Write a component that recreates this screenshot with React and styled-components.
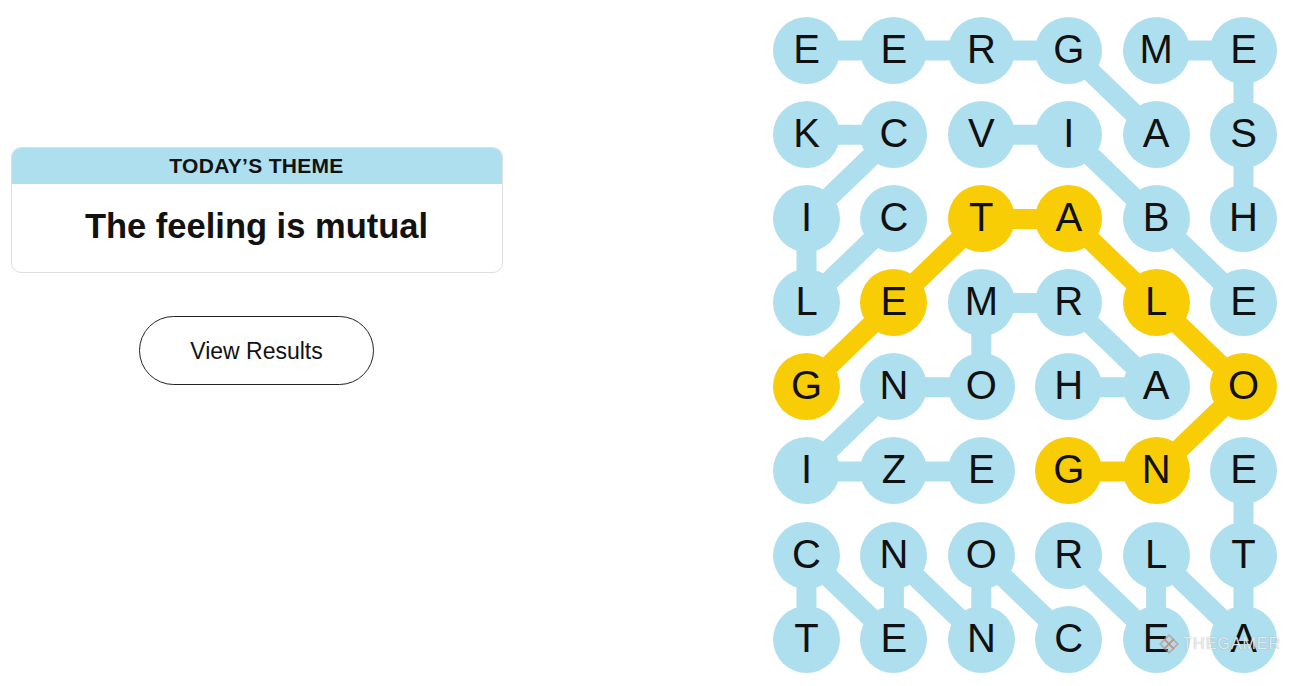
import styled, { createGlobalStyle } from "styled-components";

const GlobalStyle = createGlobalStyle`
  html, body {
    margin: 0;
    padding: 0;
    background: #ffffff;
  }
  body {
    font-family: "Liberation Sans", Arial, sans-serif;
    color: #000;
  }
`;

const BLUE = "#aedfee";
const YELLOW = "#f8cd05";
const SIZE = 67;
const COL_GAP = 20.4;
const ROW_GAP = 17.2;

const Page = styled.div`
  display: flex;
  width: 1302px;
  height: 686px;
  overflow: hidden;
`;

const LeftPane = styled.section`
  width: 492px;
  margin-left: 10.5px;
  padding-top: 146.5px;
  display: flex;
  flex-direction: column;
  align-items: center;
`;

const ThemeCard = styled.div`
  width: 100%;
  box-sizing: border-box;
  height: 126px;
  border: 1px solid #dedede;
  border-radius: 10px;
  overflow: hidden;
`;

const ThemeHeader = styled.div`
  background: ${BLUE};
  height: 36px;
  display: flex;
  align-items: center;
  justify-content: center;
  font-size: 21px;
  font-weight: 700;
  letter-spacing: 0.3px;
  color: #121212;
`;

const ThemeTitle = styled.h1`
  margin: 0;
  padding-top: 22px;
  text-align: center;
  font-size: 34.5px;
  line-height: 40px;
  font-weight: 700;
  color: #121212;
`;

const ResultsButton = styled.button`
  margin-top: 43px;
  width: 235px;
  height: 69px;
  padding-top: 3px;
  border: 1px solid #222;
  border-radius: 35px;
  background: #fff;
  font-family: "Liberation Sans", Arial, sans-serif;
  font-size: 23px;
  color: #121212;
  cursor: pointer;
`;

const Board = styled.div`
  position: relative;
  margin-left: auto;
  margin-right: 25px;
  margin-top: 16.5px;
  height: fit-content;
`;

const Lines = styled.svg`
  position: absolute;
  left: 0;
  top: 0;
  z-index: 0;
  overflow: visible;
`;

const LetterGrid = styled.div`
  position: relative;
  z-index: 1;
  display: grid;
  grid-template-columns: repeat(6, ${SIZE}px);
  grid-auto-rows: ${SIZE}px;
  column-gap: ${COL_GAP}px;
  row-gap: ${ROW_GAP}px;
`;

const Letter = styled.div`
  width: ${SIZE}px;
  height: ${SIZE}px;
  border-radius: 50%;
  background: ${(p) => (p.$gold ? YELLOW : BLUE)};
  display: flex;
  align-items: center;
  justify-content: center;
  font-size: 40px;
  font-family: "Liberation Sans", Arial, sans-serif;
  color: #111;
  line-height: 1;
  padding-bottom: 3px;
  box-sizing: border-box;
`;

const Watermark = styled.div`
  position: absolute;
  right: -4px;
  bottom: 18px;
  z-index: 2;
  display: flex;
  align-items: center;
  gap: 2px;
  font-size: 16px;
  letter-spacing: 1px;
  color: rgba(255, 255, 255, 0.8);
  text-shadow: 0 0 1px rgba(110, 110, 110, 0.7);
  pointer-events: none;
`;

const ROWS = [
  "EERGME",
  "KCVIAS",
  "ICTABH",
  "LEMRLE",
  "GNOHAO",
  "IZEGNE",
  "CNORLT",
  "TENCEA",
];

const GOLD = new Set(["2,2", "2,3", "3,1", "3,4", "4,0", "4,5", "5,3", "5,4"]);

const BLUE_EDGES = [
  [0, 0, 0, 1], [0, 1, 0, 2], [0, 2, 0, 3], [0, 3, 1, 4], [0, 4, 0, 5], [0, 5, 1, 5],
  [1, 0, 1, 1], [1, 1, 2, 0], [1, 2, 1, 3], [1, 3, 2, 4], [1, 5, 2, 5],
  [2, 0, 3, 0], [2, 1, 3, 0], [2, 4, 3, 5],
  [3, 2, 3, 3], [3, 2, 4, 2], [3, 3, 4, 4],
  [4, 1, 4, 2], [4, 1, 5, 0], [4, 3, 4, 4],
  [5, 0, 5, 1], [5, 1, 5, 2], [5, 5, 6, 5],
  [6, 0, 7, 0], [6, 0, 7, 1], [6, 1, 7, 1], [6, 1, 7, 2], [6, 2, 7, 2], [6, 2, 7, 3],
  [6, 3, 7, 4], [6, 4, 7, 4], [6, 4, 7, 5], [6, 5, 7, 5],
];

const GOLD_EDGES = [
  [2, 2, 2, 3], [2, 2, 3, 1], [3, 1, 4, 0], [2, 3, 3, 4], [3, 4, 4, 5], [4, 5, 5, 4], [5, 4, 5, 3],
];

const cx = (c) => c * (SIZE + COL_GAP) + SIZE / 2;
const cy = (r) => r * (SIZE + ROW_GAP) + SIZE / 2;

function Edge({ e, color }) {
  const [r1, c1, r2, c2] = e;
  return (
    <line
      x1={cx(c1)}
      y1={cy(r1)}
      x2={cx(c2)}
      y2={cy(r2)}
      stroke={color}
      strokeWidth="20"
      strokeLinecap="round"
    />
  );
}

function GamerLogo() {
  return (
    <svg width="22" height="22" viewBox="0 0 20 20">
      <g fill="none" stroke="rgba(200,130,110,0.55)" strokeWidth="1.6">
        <path d="M10 2 L14 6 L10 10 L6 6 Z" />
        <path d="M10 10 L14 14 L10 18 L6 14 Z" />
        <path d="M2 10 L6 6 L10 10 L6 14 Z" />
        <path d="M18 10 L14 6 L10 10 L14 14 Z" />
      </g>
    </svg>
  );
}

export default function App() {
  const width = 6 * SIZE + 5 * COL_GAP;
  const height = 8 * SIZE + 7 * ROW_GAP;
  return (
    <>
      <GlobalStyle />
      <Page>
        <LeftPane>
          <ThemeCard>
            <ThemeHeader>TODAY’S THEME</ThemeHeader>
            <ThemeTitle>The feeling is mutual</ThemeTitle>
          </ThemeCard>
          <ResultsButton>View Results</ResultsButton>
        </LeftPane>
        <Board>
          <Lines width={width} height={height}>
            {BLUE_EDGES.map((e, i) => (
              <Edge key={"b" + i} e={e} color={BLUE} />
            ))}
            {GOLD_EDGES.map((e, i) => (
              <Edge key={"g" + i} e={e} color={YELLOW} />
            ))}
          </Lines>
          <LetterGrid>
            {ROWS.map((row, r) =>
              row.split("").map((ch, c) => (
                <Letter key={r + "-" + c} $gold={GOLD.has(r + "," + c)}>
                  {ch}
                </Letter>
              ))
            )}
          </LetterGrid>
          <Watermark>
            <GamerLogo />
            THEGAMER
          </Watermark>
        </Board>
      </Page>
    </>
  );
}
